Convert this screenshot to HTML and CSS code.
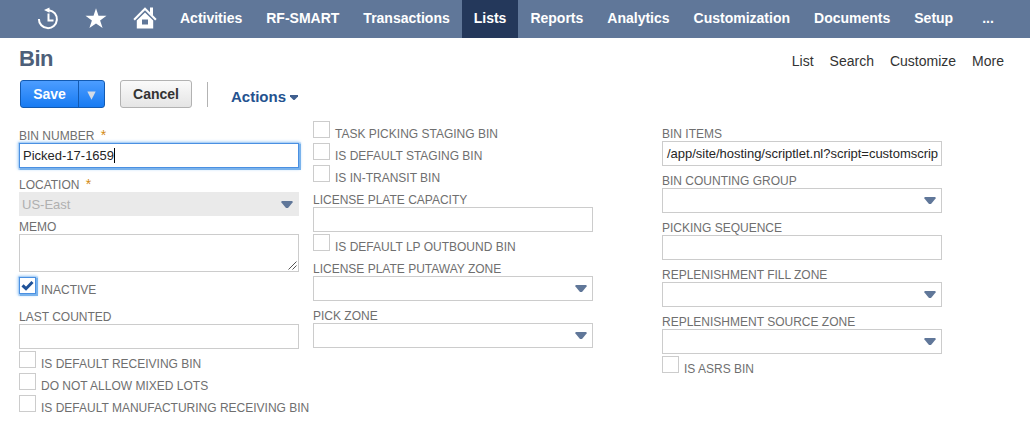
FILE: index.html
```html
<!DOCTYPE html>
<html lang="en">
<head>
<meta charset="utf-8">
<title>Bin</title>
<link rel="stylesheet" href="styles.css">
</head>
<body>
<nav class="nav">
  <div class="nav-icons">
    <svg width="22" height="24" viewBox="0 0 22 24"><path d="M1.900 12A9 9 0 1 0 12 3.200" fill="none" stroke="#fff" stroke-width="2"/><path d="M12.500.6v5.200L7 3z" fill="#fff"/><path d="M11.500 6.500v7h5" fill="none" stroke="#fff" stroke-width="2"/></svg>
    <svg width="22" height="24" viewBox="0 0 22 24"><path d="M11 1.200l2.500 7.500h8l-6.400 4.700 2.500 7.700L11 16.400l-6.600 4.700 2.500-7.700L.5 8.700h8z" fill="#fff"/></svg>
    <svg width="24" height="24" viewBox="0 0 24 24"><path d="M1.100 12.700L12 1.800l10.900 10.900" fill="none" stroke="#fff" stroke-width="2.100"/><path d="M17 .6h3v8.200l-3-3z" fill="#fff"/><path fill-rule="evenodd" d="M12 5.400l8.200 8v8H3.800v-8zM9 12.500v5h6v-5z" fill="#fff"/></svg>
  </div>
  <a class="nav-item">Activities</a>
  <a class="nav-item">RF-SMART</a>
  <a class="nav-item">Transactions</a>
  <a class="nav-item nav-item-active">Lists</a>
  <a class="nav-item">Reports</a>
  <a class="nav-item">Analytics</a>
  <a class="nav-item">Customization</a>
  <a class="nav-item">Documents</a>
  <a class="nav-item">Setup</a>
  <a class="nav-item nav-more">...</a>
</nav>
<header class="head">
  <h1 class="title">Bin</h1>
  <div class="links"><a>List</a><a>Search</a><a>Customize</a><a>More</a></div>
</header>
<div class="toolbar">
  <div class="save"><span class="save-main">Save</span><span class="save-drop"><svg width="9" height="9" viewBox="0 0 9 9"><path d="M.3.500h8.400L4.500 8.700z" fill="#d3dbe6"/></svg></span></div>
  <div class="cancel">Cancel</div>
  <div class="divider"></div>
  <div class="actions">Actions<svg width="8" height="5" viewBox="0 0 8 5"><path d="M0 0h8v1.500L4.500 5h-1L0 1.500z" fill="#3f5f8f"/></svg></div>
</div>
<main class="form">
  <section class="col">
    <div class="field gap-10"><div class="label">BIN NUMBER <b class="req">*</b></div><div class="box focus">Picked-17-1659<i class="caret"></i></div></div>
    <div class="field gap-10"><div class="label">LOCATION <b class="req">*</b></div><div class="box disabled">US-East<svg class="arrow" width="12" height="7" viewBox="0 0 12 7"><path d="M1 0h10l1 1L7 7H5L0 1z" fill="#607799"/></svg></div></div>
    <div class="field gap-4"><div class="label">MEMO</div><div class="box memo"><svg width="9" height="9" viewBox="0 0 9 9"><path d="M.5 8.500l8-8M4.500 8.500l4-4" stroke="#555" stroke-width="1" fill="none"/></svg></div></div>
    <div class="check gap-5"><span class="cb focus"><svg width="13" height="13" viewBox="0 0 13 13"><path d="M1.500 6.300l3.500 3.400 6.500-6.700" fill="none" stroke="#1f5299" stroke-width="3"/></svg></span><span class="label">INACTIVE</span></div>
    <div class="field gap-13"><div class="label">LAST COUNTED</div><div class="box"></div></div>
    <div class="check"><span class="cb"></span><span class="label">IS DEFAULT RECEIVING BIN</span></div>
    <div class="check"><span class="cb"></span><span class="label">DO NOT ALLOW MIXED LOTS</span></div>
    <div class="check"><span class="cb"></span><span class="label">IS DEFAULT MANUFACTURING RECEIVING BIN</span></div>
  </section>
  <section class="col">
    <div class="check"><span class="cb"></span><span class="label">TASK PICKING STAGING BIN</span></div>
    <div class="check"><span class="cb"></span><span class="label">IS DEFAULT STAGING BIN</span></div>
    <div class="check"><span class="cb"></span><span class="label">IS IN-TRANSIT BIN</span></div>
    <div class="field"><div class="label">LICENSE PLATE CAPACITY</div><div class="box"></div></div>
    <div class="check"><span class="cb"></span><span class="label">IS DEFAULT LP OUTBOUND BIN</span></div>
    <div class="field"><div class="label">LICENSE PLATE PUTAWAY ZONE</div><div class="box"><svg class="arrow" width="12" height="7" viewBox="0 0 12 7"><path d="M1 0h10l1 1L7 7H5L0 1z" fill="#607799"/></svg></div></div>
    <div class="field"><div class="label">PICK ZONE</div><div class="box"><svg class="arrow" width="12" height="7" viewBox="0 0 12 7"><path d="M1 0h10l1 1L7 7H5L0 1z" fill="#607799"/></svg></div></div>
  </section>
  <section class="col col-last">
    <div class="field"><div class="label">BIN ITEMS</div><div class="box url">/app/site/hosting/scriptlet.nl?script=customscrip</div></div>
    <div class="field"><div class="label">BIN COUNTING GROUP</div><div class="box"><svg class="arrow" width="12" height="7" viewBox="0 0 12 7"><path d="M1 0h10l1 1L7 7H5L0 1z" fill="#607799"/></svg></div></div>
    <div class="field"><div class="label">PICKING SEQUENCE</div><div class="box"></div></div>
    <div class="field"><div class="label">REPLENISHMENT FILL ZONE</div><div class="box"><svg class="arrow" width="12" height="7" viewBox="0 0 12 7"><path d="M1 0h10l1 1L7 7H5L0 1z" fill="#607799"/></svg></div></div>
    <div class="field"><div class="label">REPLENISHMENT SOURCE ZONE</div><div class="box"><svg class="arrow" width="12" height="7" viewBox="0 0 12 7"><path d="M1 0h10l1 1L7 7H5L0 1z" fill="#607799"/></svg></div></div>
    <div class="check"><span class="cb"></span><span class="label">IS ASRS BIN</span></div>
  </section>
</main>
</body>
</html>
```
FILE: styles.css
```css
* { box-sizing: border-box; }
body { margin: 0; height: 433px; overflow: hidden; background: #fff; font-family: "Liberation Sans", Arial, sans-serif; color: #262626; }
svg { display: block; flex: none; }
.nav { display: flex; height: 38px; background: #607799; }
.nav-icons { display: flex; gap: 26px; width: 168px; padding: 7px 0 0 37px; flex: none; }
.nav-item { padding: 0 12px; line-height: 37px; font-size: 14px; font-weight: bold; color: #fff; white-space: nowrap; }
.nav-item-active { background: #24385b; }
.nav-more { padding-left: 17px; }
.head { display: flex; justify-content: space-between; height: 42px; padding: 8px 26px 0 19px; }
.title { margin: 0; font-size: 22px; line-height: 26px; letter-spacing: -0.5px; color: #4d5f79; }
.links { display: flex; gap: 16px; font-size: 14px; line-height: 30px; color: #333; }
.toolbar { display: flex; height: 39px; padding-left: 20px; font-weight: bold; }
.save, .cancel { display: flex; height: 28px; border-radius: 3px; font-size: 14px; line-height: 26px; text-align: center; }
.save { width: 85px; border: 1px solid #125ab2; background: linear-gradient(#4c9dff, #187bf2); color: #fff; }
.save-main { width: 58px; border-right: 1px solid #125ab2; }
.save-drop { display: flex; flex: 1; align-items: center; justify-content: center; padding-top: 2px; }
.cancel { width: 72px; margin-left: 15px; justify-content: center; border: 1px solid #b2b2b2; background: linear-gradient(#fafafa, #e5e5e5); color: #333; }
.divider { width: 1px; height: 25px; margin: 2px 23px 0 15px; background: #b3b3b3; }
.actions { display: flex; gap: 4px; font-size: 15px; line-height: 34px; color: #24528f; }
.actions svg { margin-top: 15px; }
.form { display: flex; padding-left: 19px; }
.col { width: 280px; margin-right: 14px; flex: none; }
.col-last { margin: 0 0 0 55px; }
.field { display: flow-root; margin-top: 8px; }
.label { font-size: 12px; line-height: 14px; height: 14px; color: #6f6f6f; white-space: nowrap; }
.req { margin-left: 3px; color: #d38a13; font-weight: normal; font-size: 14px; line-height: 0; }
.box { display: flex; align-items: center; height: 25px; padding: 0 5px 0 3px; border: 1px solid #ccc; background: #fff; font-size: 13px; white-space: nowrap; }
.url { padding-left: 4px; letter-spacing: -0.02px; }
.focus { border-color: #4a90e2; box-shadow: 0 0 1px 1.5px #7ab3ec, 0 0 3px 1px #9cc8f5; }
.caret { width: 1px; height: 15px; background: #000; }
.disabled { height: 24px; padding-left: 2px; border-color: #eaeaea; background: #eaeaea; color: #b0b0b0; }
.arrow { margin-left: auto; }
.memo { height: 38px; align-items: flex-end; justify-content: flex-end; padding: 0 1px 1px; }
.check { display: flex; gap: 5px; height: 20px; margin-top: 2px; }
.check .label { margin-top: 6px; }
.cb { display: flex; align-items: center; justify-content: center; width: 17px; height: 17px; flex: none; border: 1px solid #ccc; background: #fff; }
.cb.focus { border-color: #4a90e2; }
.gap-4 { margin-top: 4px; }
.gap-5 { margin-top: 5px; }
.gap-10 { margin-top: 10px; }
.gap-13 { margin-top: 13px; }
```
